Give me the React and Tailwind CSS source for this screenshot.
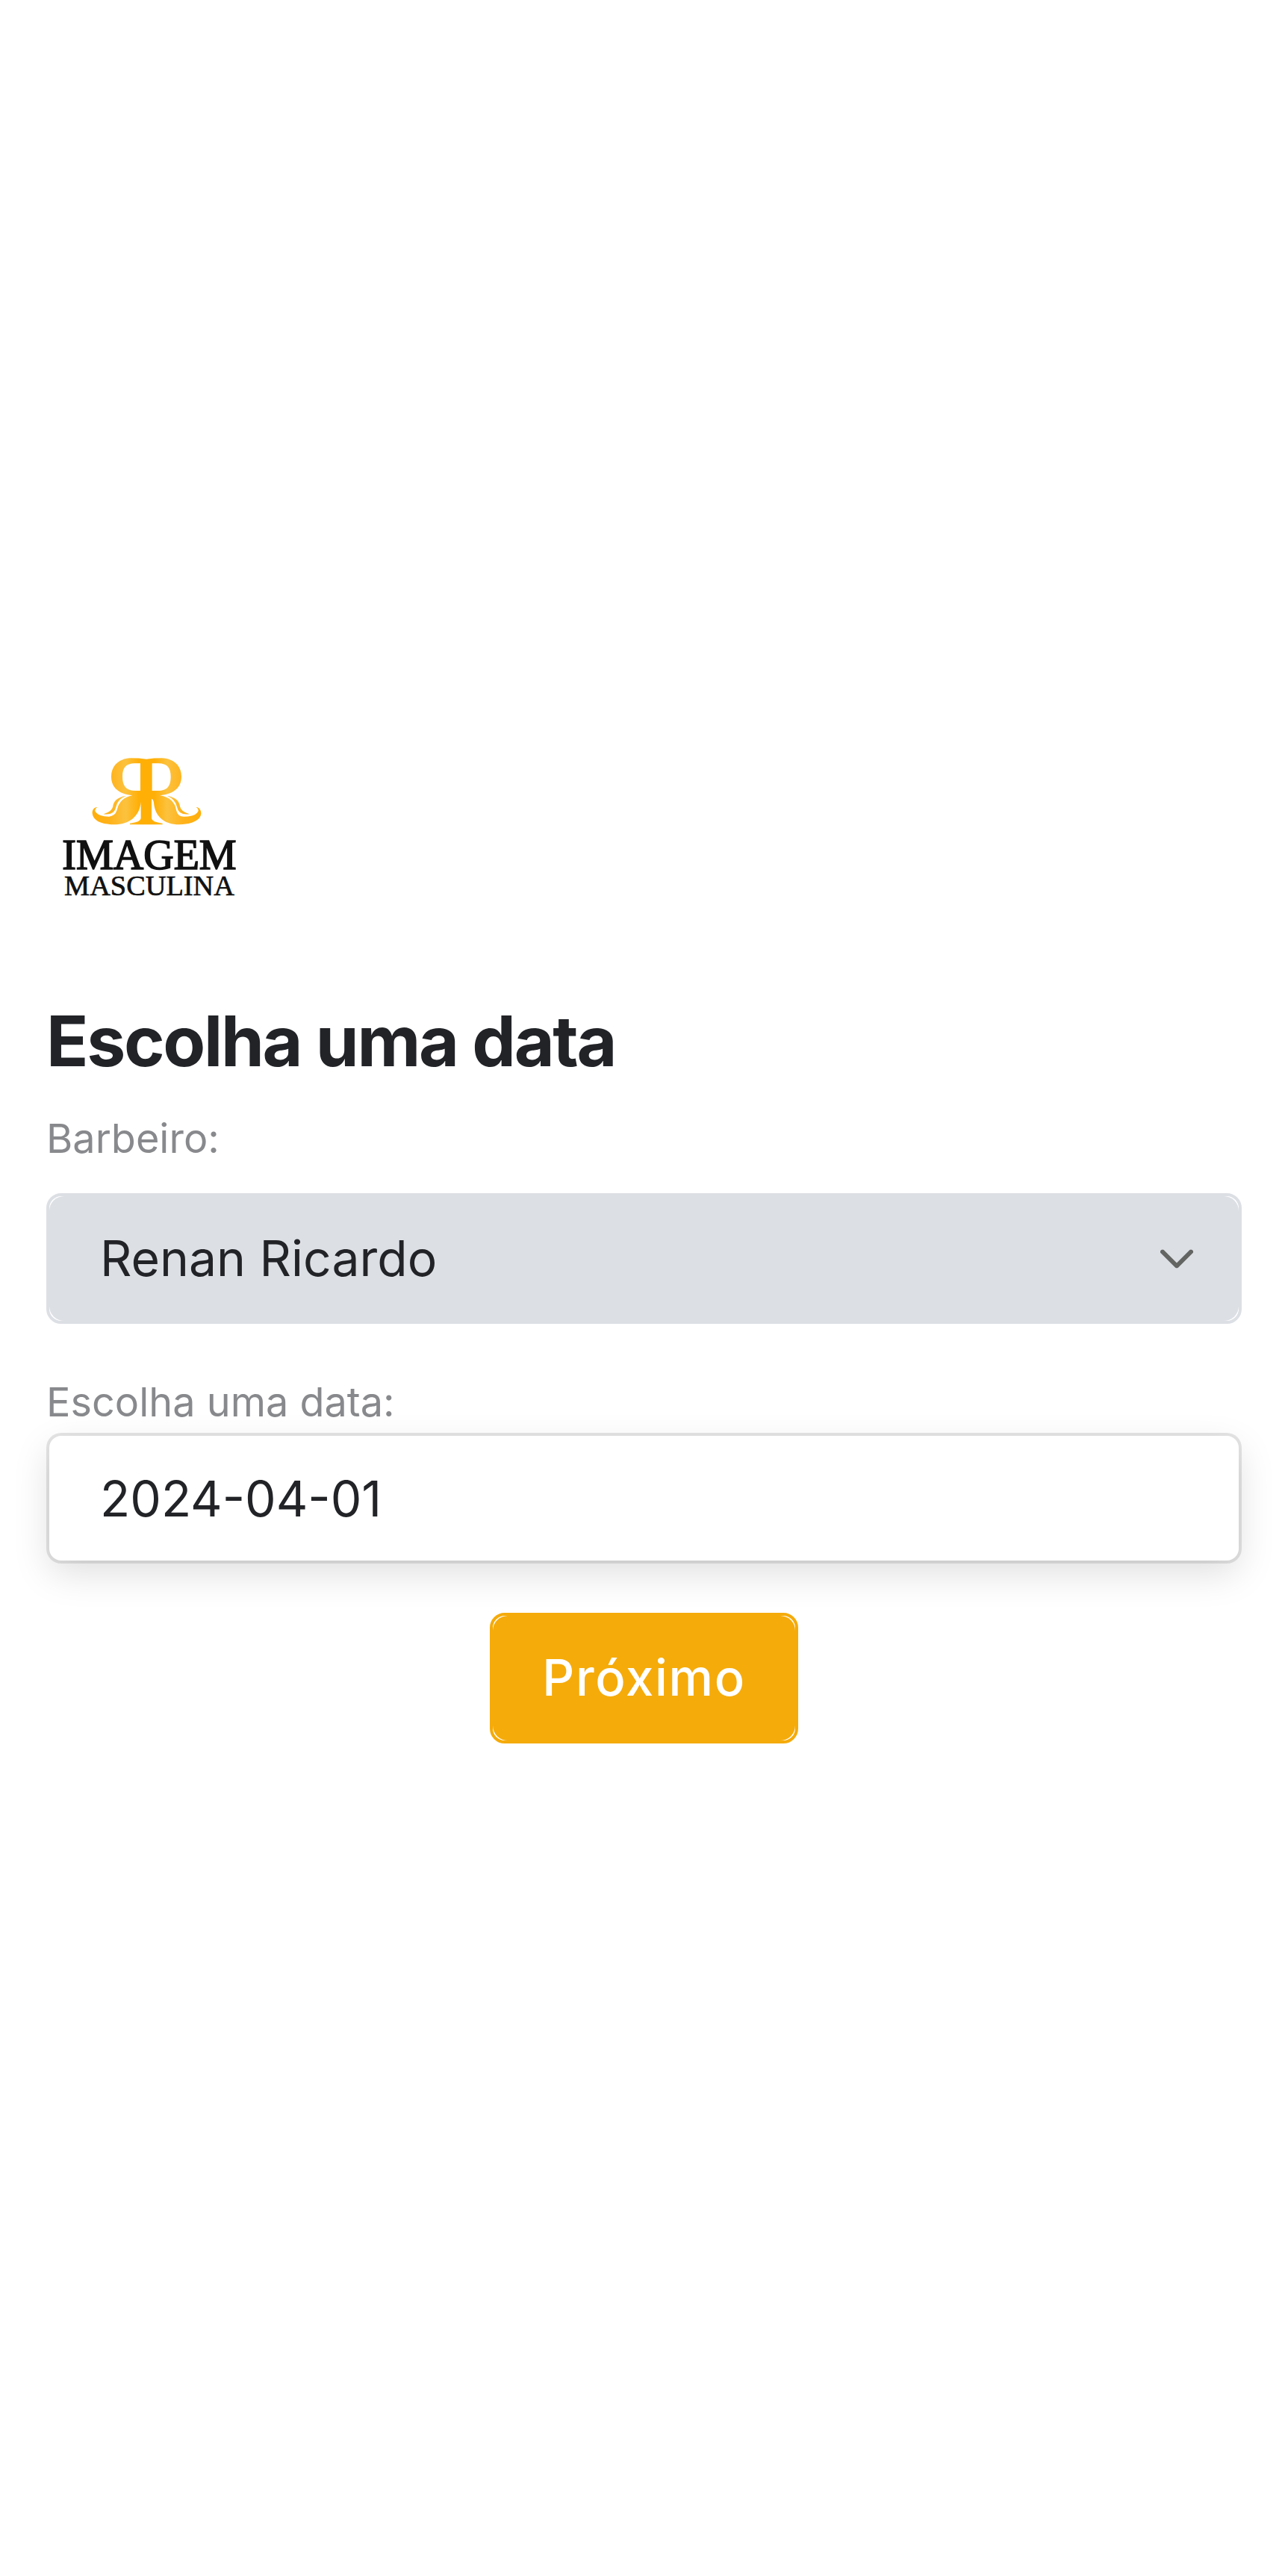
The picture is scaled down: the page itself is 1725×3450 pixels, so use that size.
import { useState } from "react";

function Logo() {
  return (
    <svg viewBox="6 -54 828 828" className="size-[276px]" role="img" aria-label="Imagem Masculina">
      <defs>
        <linearGradient id="gold" x1="190" x2="628" y1="0" y2="0" gradientUnits="userSpaceOnUse">
          <stop offset="0" stopColor="#ffae0a" />
          <stop offset="0.16" stopColor="#ffb21a" />
          <stop offset="0.31" stopColor="#fcc23e" />
          <stop offset="0.43" stopColor="#ffaf06" />
          <stop offset="0.57" stopColor="#ffaf06" />
          <stop offset="0.69" stopColor="#fcc23e" />
          <stop offset="0.84" stopColor="#ffb21a" />
          <stop offset="1" stopColor="#ffae0a" />
        </linearGradient>
      </defs>
      <g fill="url(#gold)">
        <path
          fillRule="evenodd"
          d="M345 76 Q378 76 408 80 Q438 76 470 76 C520 78 549 108 549 150 C549 194 520 219 463 226 Q520 236 528 285 Q534 312 560 311 Q604 311 616 290 Q620 280 608 273 C622 274 629 287 628 300 C624 328 587 342 540 343 C480 343 442 310 438 255 Q435 240 429 240 L429 318 Q430 333 473 338 L473 343 L342 343 L342 338 Q385 333 386 318 L386 252 C381 310 340 343 278 343 C228 342 194 328 191 298 C190 286 196 274 211 273 Q199 280 203 291 Q216 311 258 311 Q282 309 290 285 Q300 236 352 226 C296 219 267 194 267 150 C267 108 296 78 345 76 Z M384 97 L362 97 C326 97 312 116 312 150 C312 186 325 207 364 207 L384 207 Z M431 97 L431 207 L455 207 C494 207 506 186 506 150 C506 116 492 97 456 97 Z"
        />
        <path d="M326 227 C287 234 276 252 274 270 Q270 291 236 301 Q280 306 286 272 Q292 242 326 227 Z" />
        <path d="M491 227 C530 234 541 252 543 270 Q547 291 581 301 Q537 306 531 272 Q525 242 491 227 Z" />
      </g>
      <g fill="#111" stroke="#111" textAnchor="middle" fontFamily='"Liberation Serif", serif'>
        <text x="420" y="522" fontSize="168" strokeWidth="5">
          IMAGEM
        </text>
        <text x="420" y="628" fontSize="115" strokeWidth="2">
          MASCULINA
        </text>
      </g>
    </svg>
  );
}

export default function App() {
  const [barber, setBarber] = useState("Renan Ricardo");
  const [date, setDate] = useState("2024-04-01");

  return (
    <main className="flex min-h-screen flex-col justify-center bg-white px-[62px] pb-[143px] font-['Inter',sans-serif] text-[#212327]">
      <Logo />
      <form className="flex flex-col" onSubmit={(e) => e.preventDefault()}>
        <h1 className="mt-[86px] text-[93px] leading-[120px] font-bold tracking-tight">Escolha uma data</h1>

        <label htmlFor="barber" className="mt-[38px] text-[54px] leading-[66px] text-[#88898c]">
          Barbeiro:
        </label>
        <div className="relative mt-[40px] rounded-[20px] border-4 border-[#dcdfe4]">
          <select
            id="barber"
            value={barber}
            onChange={(e) => setBarber(e.target.value)}
            className="block h-[167px] w-full appearance-none rounded-[20px] bg-[#dcdfe4] px-[68px] text-[66px]"
          >
            <option>Renan Ricardo</option>
          </select>
          <svg
            viewBox="0 0 44 25"
            className="pointer-events-none absolute top-1/2 right-[61px] h-[25px] w-[44px] -translate-y-1/2"
            fill="none"
            stroke="#636563"
            strokeWidth="6"
            strokeLinecap="round"
            strokeLinejoin="round"
            aria-hidden="true"
          >
            <path d="M3 3 L22 22 L41 3" />
          </svg>
        </div>

        <label htmlFor="date" className="mt-[72px] text-[54px] leading-[66px] text-[#88898c]">
          Escolha uma data:
        </label>
        <div className="mt-[8px] p-1">
          <input
            id="date"
            type="text"
            value={date}
            onChange={(e) => setDate(e.target.value)}
            className="block h-[167px] w-full rounded-[16px] bg-white px-[68px] text-[66px] shadow-[0_0_0_4px_rgba(0,0,0,0.1),0_17px_50px_rgba(0,0,0,0.13)]"
          />
        </div>

        <div className="mt-[66px] self-center rounded-[20px] border-4 border-[#f5ab0a]">
          <button
            type="submit"
            className="block h-[167px] rounded-[20px] bg-[#f5ab0a] px-[66px] text-[67px] font-medium tracking-wide text-white"
          >
            Próximo
          </button>
        </div>
      </form>
    </main>
  );
}
